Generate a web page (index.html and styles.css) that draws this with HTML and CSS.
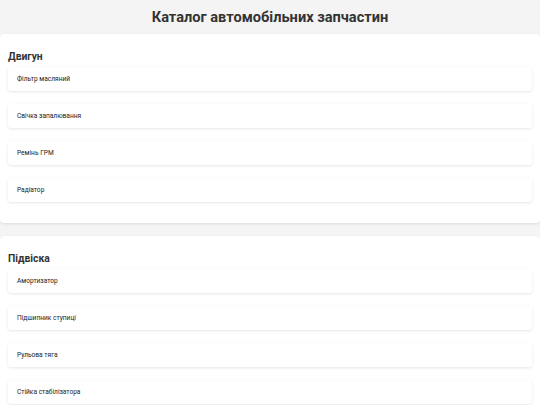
FILE: index.html
```html
<!DOCTYPE html>
<html lang="uk">
<head>
<meta charset="utf-8">
<title>Каталог автомобільних запчастин</title>
<link rel="stylesheet" href="styles.css">
</head>
<body>
<header class="header">
  <h1 class="title">Каталог автомобільних запчастин</h1>
</header>
<main class="catalog">
  <section class="category">
    <h2 class="category-title">Двигун</h2>
    <div class="item">Фільтр масляний</div>
    <div class="item">Свічка запалювання</div>
    <div class="item">Ремінь ГРМ</div>
    <div class="item">Радіатор</div>
  </section>
  <section class="category">
    <h2 class="category-title">Підвіска</h2>
    <div class="item">Амортизатор</div>
    <div class="item">Підшипник ступиці</div>
    <div class="item">Рульова тяга</div>
    <div class="item">Стійка стабілізатора</div>
  </section>
</main>
</body>
</html>
```

FILE: styles.css
```css
* { box-sizing: border-box; }
html, body {
  margin: 0;
  padding: 0;
  background: #f4f4f4;
  font-family: Roboto, "Liberation Sans", Arial, sans-serif;
  color: #333;
}
.header {
  height: 34px;
  display: flex;
  align-items: center;
  justify-content: center;
}
.title {
  margin: 0;
  font-size: 14.6px;
  font-weight: 700;
  color: #333;
}
.catalog {
  display: flex;
  flex-direction: column;
  gap: 13px;
}
.category {
  background: #fff;
  border-radius: 4px;
  box-shadow: 0 1px 3px rgba(0, 0, 0, 0.1);
  padding: 8px 8px 8px;
}
.category-title {
  margin: 8px 0 4px;
  font-size: 10.3px;
  font-weight: 700;
  color: #333;
}
.item {
  height: 24px;
  display: flex;
  align-items: center;
  padding: 0 9px;
  margin-bottom: 13px;
  font-size: 6.6px;
  color: #222;
  background: #fff;
  border-radius: 3px;
  box-shadow: 0 1px 3px rgba(0, 0, 0, 0.1);
}
```
